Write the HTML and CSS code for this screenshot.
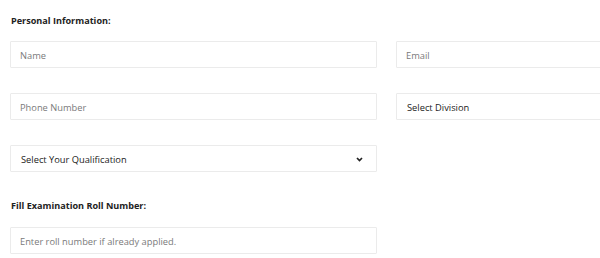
FILE: index.html
```html
<!DOCTYPE html>
<html>
<head>
<meta charset="utf-8">
<link rel="stylesheet" href="styles.css">
</head>
<body>
<div class="viewport">
<form class="form">
  <h3 class="section-title">Personal Information:</h3>
  <div class="grid">
    <input class="field" type="text" placeholder="Name">
    <input class="field" type="email" placeholder="Email">
    <input class="field" type="text" placeholder="Phone Number">
    <div class="field select-like">Select Division</div>
    <div class="field select-like with-arrow">
      <span>Select Your Qualification</span>
      <svg class="chev" width="7" height="5" viewBox="0 0 7 5"><path d="M1 1 L3.5 3.5 L6 1" fill="none" stroke="#222" stroke-width="1.7"/></svg>
    </div>
  </div>
  <h3 class="section-title second">Fill Examination Roll Number:</h3>
  <div class="grid">
    <input class="field" type="text" placeholder="Enter roll number if already applied.">
  </div>
</form>
</div>
</body>
</html>
```
FILE: styles.css
```css
html, body {
  margin: 0;
  padding: 0;
  background: #fff;
}
body {
  font-family: "Open Sans", "Noto Sans", sans-serif;
  color: #333;
}
.viewport {
  width: 600px;
  height: 258px;
  overflow: hidden;
}
.form {
  padding: 14px 0 0 10px;
  width: 760px;
}
.section-title {
  margin: 0 0 13px 1px;
  font-size: 9.1px;
  line-height: 14px;
  font-weight: 700;
  color: #222;
}
.section-title.second {
  margin-top: 27px;
  margin-bottom: 14px;
}
.grid {
  display: grid;
  grid-template-columns: 367px 367px;
  column-gap: 19px;
  row-gap: 25px;
}
.field {
  box-sizing: border-box;
  height: 27px;
  margin: 0;
  padding: 1px 9px 0;
  border: 1px solid #ebebeb;
  border-radius: 1px;
  background: #fff;
  font-family: "Open Sans", "Noto Sans", sans-serif;
  font-size: 9.3px;
  color: #333;
  outline: none;
}
.field::placeholder {
  color: #7a7a7a;
}
.select-like {
  display: flex;
  align-items: center;
  justify-content: space-between;
  padding-left: 10px;
  color: #222;
}
.chev {
  margin-right: 4px;
}
```
